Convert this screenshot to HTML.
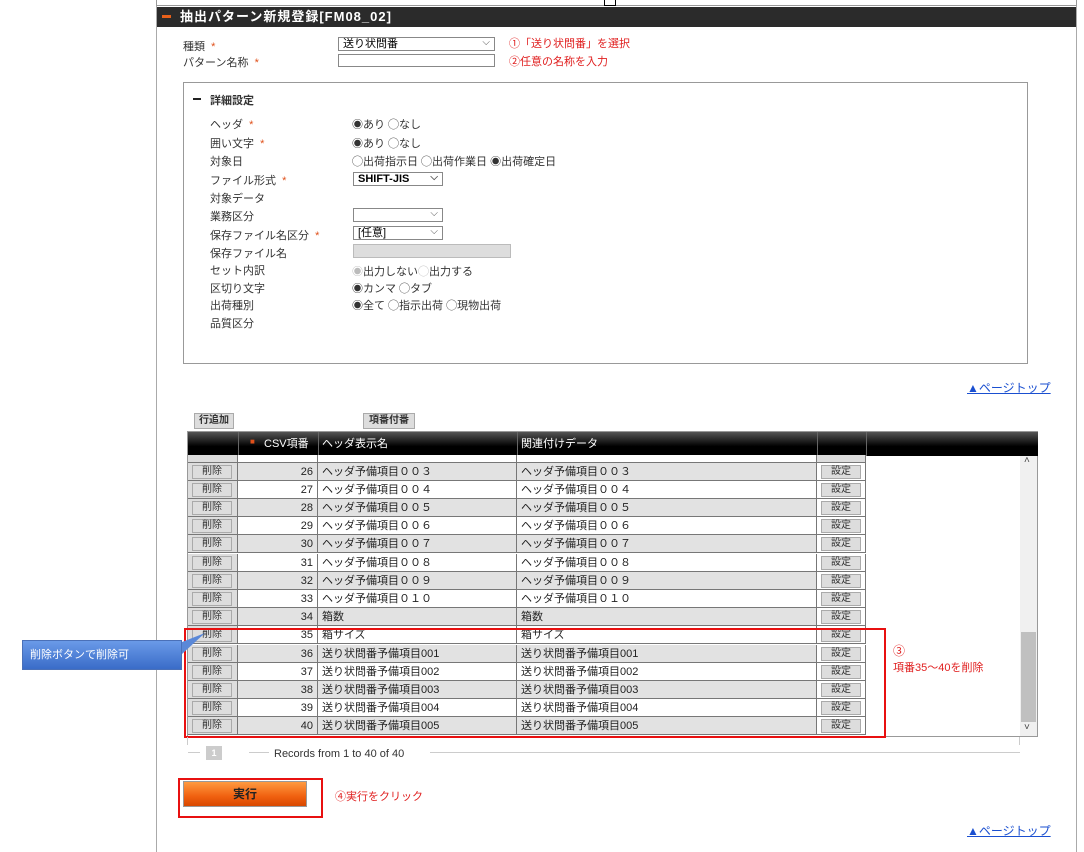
<!DOCTYPE html>
<html><head><meta charset="utf-8"><style>
*{box-sizing:border-box;margin:0;padding:0}
body{width:1084px;height:852px;background:#fff;font-family:"Liberation Sans","Noto Sans CJK JP",sans-serif;font-size:11px;color:#333;position:relative;overflow:hidden}
.a{position:absolute;white-space:nowrap}
.req{color:#e0501a}
.red{color:#e02020}
.sel{position:absolute;border:1px solid #888;background:#fff;height:14px;font-size:11px;padding-left:4px;line-height:12px;color:#000}
.sel:after{content:"⌵";position:absolute;right:4px;top:-1px;font-size:10px;color:#555}
.btn{position:absolute;background:#ddd;border:1px solid #aaa;font-size:10px;text-align:center;color:#333}
.row{position:absolute;left:188px;width:678px;height:18.2px;border-bottom:1px solid #777}
.row div{position:absolute;top:0;height:100%;border-right:1px solid #777;line-height:18px;font-size:11px;color:#222}
.link{color:#1a4fd0;text-decoration:underline;font-size:12px}
</style></head><body>
<div class="a" style="left:156px;top:0;width:921px;height:6px;border:1px solid #999;border-top:none"></div>
<div class="a" style="left:604px;top:0;width:12px;height:6px;border:1px solid #000;border-top:none;background:#fff"></div>
<div class="a" style="left:156px;top:6px;width:1px;height:846px;background:#aaa"></div>
<div class="a" style="left:1076px;top:6px;width:1px;height:846px;background:#aaa"></div>
<div class="a" style="left:157px;top:7px;width:919px;height:20px;background:#2b2b2b"></div>
<div class="a" style="left:162px;top:15px;width:9px;height:3px;background:#e8601a"></div>
<div class="a" style="left:180px;top:8px;color:#fff;font-size:13px;font-weight:bold;letter-spacing:1px;line-height:18px">抽出パターン新規登録[FM08_02]</div>

<div class="a" style="left:183px;top:38px">種類 <span class="req">&nbsp;*</span></div>
<div class="a" style="left:183px;top:54px">パターン名称 <span class="req">&nbsp;*</span></div>
<div class="sel" style="left:338px;top:37px;width:157px;height:14px">送り状問番</div>
<div class="a" style="left:338px;top:54px;width:157px;height:13px;border:1px solid #888"></div>
<div class="a red" style="left:509px;top:35px">①「送り状問番」を選択</div>
<div class="a red" style="left:509px;top:53px">②任意の名称を入力</div>

<div class="a" style="left:183px;top:82px;width:845px;height:282px;border:1px solid #999"></div>
<div class="a" style="left:193px;top:98px;width:8px;height:2px;background:#222"></div>
<div class="a" style="left:210px;top:92px;font-weight:bold;font-size:11px">詳細設定</div>

<div class="a" style="left:210px;top:116px">ヘッダ <span class="req">&nbsp;*</span></div>
<div class="a" style="left:352px;top:116px">◉あり ◯なし</div>
<div class="a" style="left:210px;top:135px">囲い文字 <span class="req">&nbsp;*</span></div>
<div class="a" style="left:352px;top:135px">◉あり ◯なし</div>
<div class="a" style="left:210px;top:153px">対象日</div>
<div class="a" style="left:352px;top:153px">◯出荷指示日 ◯出荷作業日 ◉出荷確定日</div>
<div class="a" style="left:210px;top:172px">ファイル形式 <span class="req">&nbsp;*</span></div>
<div class="sel" style="left:353px;top:172px;width:90px;font-weight:bold">SHIFT-JIS</div>
<div class="a" style="left:210px;top:190px">対象データ</div>
<div class="a" style="left:210px;top:208px">業務区分</div>
<div class="sel" style="left:353px;top:208px;width:90px"></div>
<div class="a" style="left:210px;top:227px">保存ファイル名区分 <span class="req">&nbsp;*</span></div>
<div class="sel" style="left:353px;top:226px;width:90px">[任意]</div>
<div class="a" style="left:210px;top:245px">保存ファイル名</div>
<div class="a" style="left:353px;top:244px;width:158px;height:14px;background:#ddd;border:1px solid #bbb"></div>
<div class="a" style="left:210px;top:262px">セット内訳</div>
<div class="a" style="left:352px;top:263px"><span style="color:#bbb">◉</span>出力しない<span style="color:#bbb">◯</span>出力する</div>
<div class="a" style="left:210px;top:280px">区切り文字</div>
<div class="a" style="left:352px;top:280px">◉カンマ ◯タブ</div>
<div class="a" style="left:210px;top:297px">出荷種別</div>
<div class="a" style="left:352px;top:297px">◉全て ◯指示出荷 ◯現物出荷</div>
<div class="a" style="left:210px;top:315px">品質区分</div>

<div class="a link" style="left:967px;top:379px">▲ページトップ</div>

<div class="btn" style="left:194px;top:413px;width:40px;height:16px;font-weight:bold;line-height:14px">行追加</div>
<div class="btn" style="left:363px;top:413px;width:52px;height:16px;font-weight:bold;line-height:14px">項番付番</div>

<div class="a" style="left:187px;top:431px;width:851px;height:306px;border:1px solid #999"></div>
<div class="a" style="left:188px;top:432px;width:850px;height:24px;background:linear-gradient(#555,#000 60%)"></div>
<div class="a" style="left:238px;top:432px;width:1px;height:24px;background:#666"></div>
<div class="a" style="left:318px;top:432px;width:1px;height:24px;background:#666"></div>
<div class="a" style="left:517px;top:432px;width:1px;height:24px;background:#666"></div>
<div class="a" style="left:817px;top:432px;width:1px;height:24px;background:#666"></div>
<div class="a" style="left:866px;top:432px;width:1px;height:24px;background:#666"></div>
<div class="a" style="left:250px;top:437px;color:#e0501a;font-size:8px">■</div>
<div class="a" style="left:264px;top:435px;color:#fff">CSV項番</div>
<div class="a" style="left:322px;top:435px;color:#fff">ヘッダ表示名</div>
<div class="a" style="left:521px;top:435px;color:#fff">関連付けデータ</div>

<div class="a" style="left:1020px;top:456px;width:17px;height:280px;background:#f0f0f0"></div>
<div class="a" style="left:1021px;top:632px;width:15px;height:90px;background:#c0c0c0"></div>
<div class="a" style="left:1024px;top:455px;font-size:10px;color:#444">˄</div>
<div class="a" style="left:1024px;top:722px;font-size:10px;color:#444">˅</div>

<div class="row" style="top:455px;height:8px;background:#eee"><div style="left:0;width:50px;background:#ddd"></div><div style="left:50px;width:80px;background:#fff"></div><div style="left:130px;width:199px;background:#fff"></div><div style="left:329px;width:300px;background:#fff"></div><div style="left:629px;width:49px;background:#ddd"></div></div>
<div id="rows"></div>
<script>
var names=["ヘッダ予備項目００３","ヘッダ予備項目００４","ヘッダ予備項目００５","ヘッダ予備項目００６","ヘッダ予備項目００７","ヘッダ予備項目００８","ヘッダ予備項目００９","ヘッダ予備項目０１０","箱数","箱サイズ","送り状問番予備項目001","送り状問番予備項目002","送り状問番予備項目003","送り状問番予備項目004","送り状問番予備項目005"];
var h="";
for(var i=0;i<15;i++){var n=26+i;var bg=(n%2==0)?"#e2e2e2":"#fff";var t=462.5+i*18.2;
h+='<div class="row" style="top:'+t+'px;background:'+bg+'">'+
'<div style="left:0;width:50px;background:#ddd"><span class="btn" style="left:4px;top:2px;width:40px;height:14px;line-height:12px">削除</span></div>'+
'<div style="left:50px;width:80px;text-align:right;padding-right:4px">'+n+'</div>'+
'<div style="left:130px;width:199px;padding-left:4px">'+names[i]+'</div>'+
'<div style="left:329px;width:300px;padding-left:4px">'+names[i]+'</div>'+
'<div style="left:629px;width:49px;background:#fff"><span class="btn" style="left:4px;top:2px;width:40px;height:14px;line-height:12px">設定</span></div></div>';}
document.getElementById("rows").innerHTML=h;
</script>

<div class="a" style="left:184px;top:628px;width:702px;height:110px;border:2px solid #e81010"></div>
<div class="a red" style="left:893px;top:642px;font-size:12px">③</div>
<div class="a red" style="left:893px;top:659px">項番35～40を削除</div>

<div class="a" style="left:22px;top:640px;width:160px;height:30px;background:linear-gradient(#6a9ae8,#3a6cc8);border:1px solid #4a70b8;color:#fff;font-size:11px;line-height:28px;padding-left:7px">削除ボタンで削除可</div>
<svg class="a" style="left:178px;top:630px" width="30" height="30"><polygon points="4,12 27,3 4,24" fill="#5a88d8"/></svg>

<div class="a" style="left:187px;top:737px;width:833px;height:16px;border-left:1px solid #ccc;border-right:1px solid #ccc;border-bottom:1px solid #ccc"></div>
<div class="a" style="left:186px;top:745px;width:840px;height:14px;background:#fff"></div>
<div class="a" style="left:188px;top:752px;width:12px;height:1px;background:#ccc"></div>
<div class="a" style="left:206px;top:746px;width:16px;height:14px;background:#ccc;color:#fff;font-size:9px;text-align:center;line-height:14px;font-weight:bold">1</div>
<div class="a" style="left:249px;top:752px;width:20px;height:1px;background:#ccc"></div>
<div class="a" style="left:274px;top:748px;font-size:11px;color:#333">Records from 1 to 40 of 40</div>
<div class="a" style="left:430px;top:752px;width:590px;height:1px;background:#ccc"></div>

<div class="a" style="left:178px;top:778px;width:145px;height:40px;border:2px solid #e81010"></div>
<div class="a" style="left:183px;top:781px;width:124px;height:26px;background:linear-gradient(#ff9a40,#f06010 60%,#d84800);border:1px solid #999;text-align:center;line-height:24px;font-weight:bold;font-size:12px;color:#222">実行</div>
<div class="a red" style="left:335px;top:788px">④実行をクリック</div>

<div class="a link" style="left:967px;top:822px">▲ページトップ</div>
</body></html>
